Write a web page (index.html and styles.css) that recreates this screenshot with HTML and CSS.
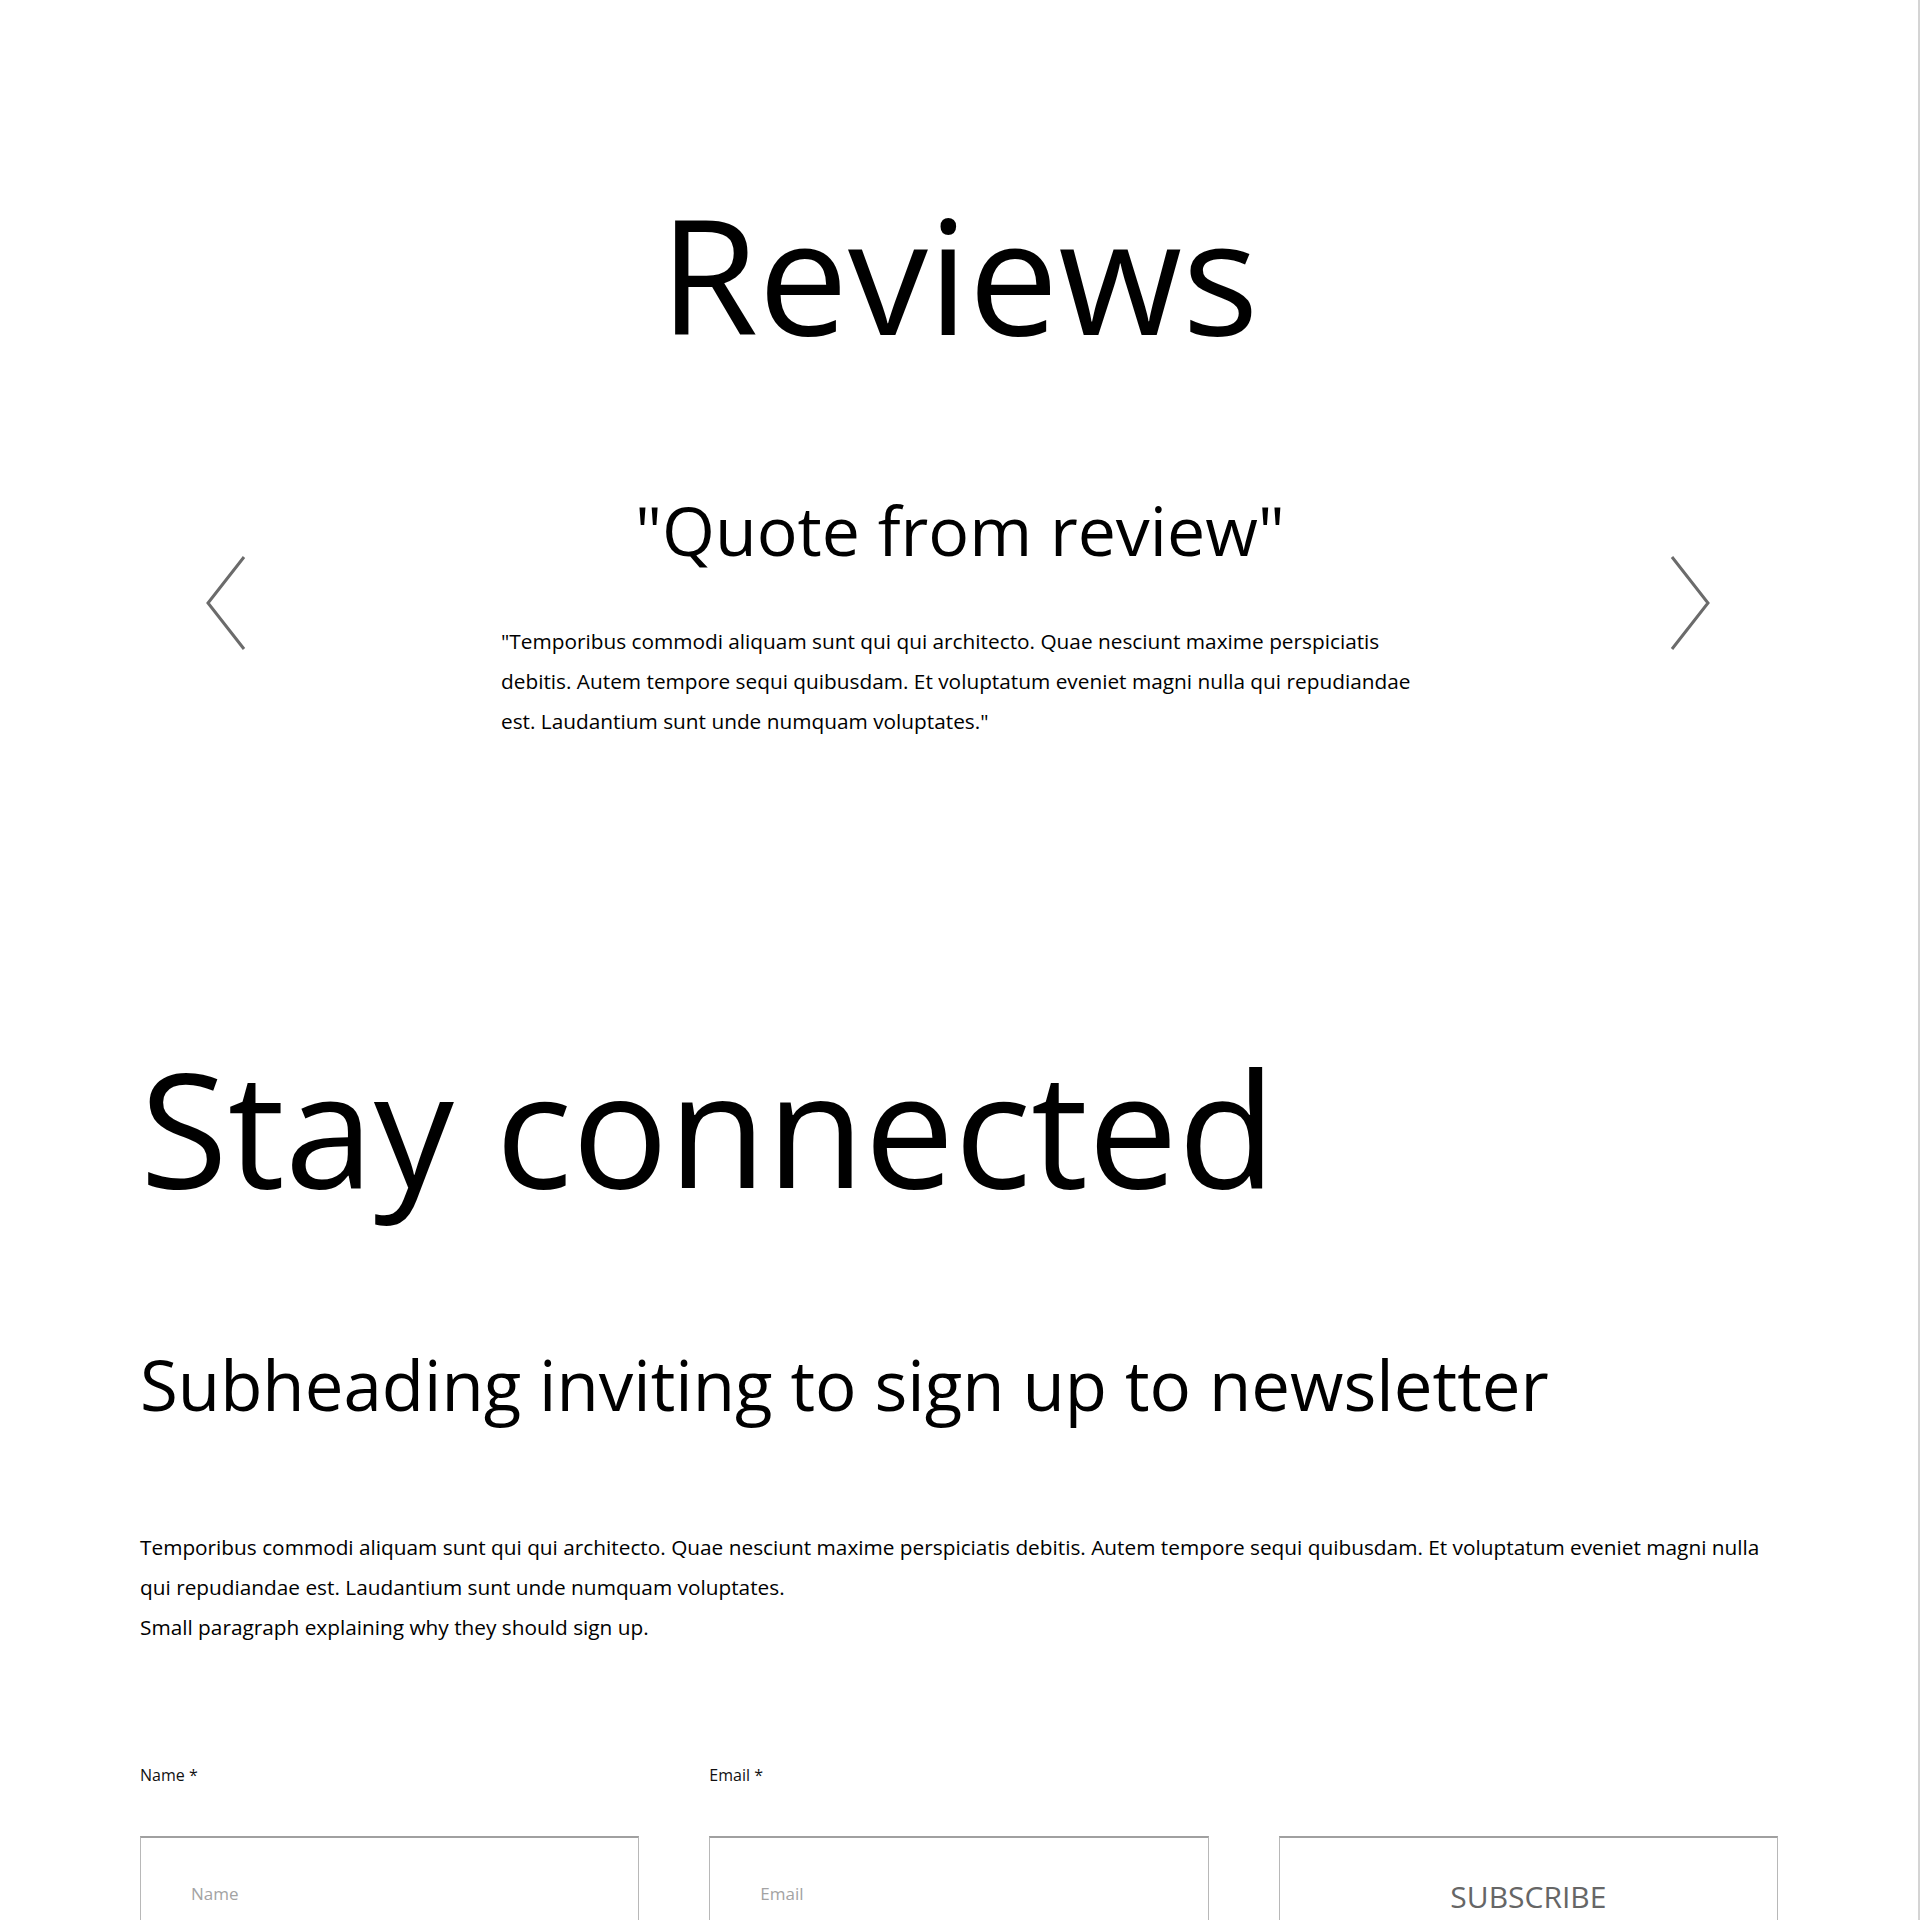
FILE: index.html
```html
<!DOCTYPE html>
<html lang="en">
<head>
    <meta charset="UTF-8">
    <meta name="viewport" content="width=device-width, initial-scale=1.0">
    <title>Reviews</title>
    <link rel="stylesheet" href="styles.css">
</head>
<body>
    <div class="page">
        <section class="reviews">
            <h1 class="big-title center">Reviews</h1>
            <div class="slider">
                <button class="arrow" aria-label="Previous">
                    <svg width="40" height="96" viewBox="0 0 40 96"><polyline points="38,2 2,48 38,94" /></svg>
                </button>
                <div class="review">
                    <h2 class="sub-title center">"Quote from review"</h2>
                    <p class="text">"Temporibus commodi aliquam sunt qui qui architecto. Quae nesciunt maxime perspiciatis debitis. Autem tempore sequi quibusdam. Et voluptatum eveniet magni nulla qui repudiandae est. Laudantium sunt unde numquam voluptates."</p>
                </div>
                <button class="arrow arrow-next" aria-label="Next">
                    <svg width="40" height="96" viewBox="0 0 40 96"><polyline points="2,2 38,48 2,94" /></svg>
                </button>
            </div>
        </section>

        <section class="newsletter">
            <h1 class="big-title">Stay connected</h1>
            <h2 class="sub-title">Subheading inviting to sign up to newsletter</h2>
            <p class="text">Temporibus commodi aliquam sunt qui qui architecto. Quae nesciunt maxime perspiciatis debitis. Autem tempore sequi quibusdam. Et voluptatum eveniet magni nulla qui repudiandae est. Laudantium sunt unde numquam voluptates.<br>Small paragraph explaining why they should sign up.</p>

            <form class="signup" onsubmit="return false">
                <div class="field">
                    <label for="name">Name *</label>
                    <input type="text" id="name" placeholder="Name">
                </div>
                <div class="field">
                    <label for="email">Email *</label>
                    <input type="email" id="email" placeholder="Email">
                </div>
                <div class="field">
                    <button type="submit" class="subscribe">SUBSCRIBE</button>
                </div>
            </form>
        </section>
    </div>
</body>
</html>
```

FILE: styles.css
```css
body {
    margin: 0;
    padding: 0;
    background-color: #fff;
    color: #000;
    font-family: "Open Sans", "Noto Sans", Arial, sans-serif;
}
.page {
    min-height: 100vh;
    border-right: 2px solid #d4d4d4;
    box-sizing: border-box;
}
.center {
    text-align: center;
}
.big-title {
    font-size: 160px;
    font-weight: 400;
    line-height: 1.2;
    margin: 0;
}
.sub-title {
    font-size: 69px;
    font-weight: 400;
    line-height: 1.2;
    margin: 0;
}
.text {
    font-size: 20.8px;
    line-height: 40px;
    margin: 0;
}

/* reviews */
.reviews {
    padding-top: 177px;
}
.slider {
    display: flex;
    align-items: center;
    padding: 0 208px 0 206px;
    margin-top: 120px;
}
.review {
    width: 940px;
    margin-left: 255px;
}
.review .sub-title {
    width: 918px;
    font-size: 68px;
}
.review .text {
    margin-top: 50px;
}
.arrow {
    background: none;
    border: none;
    padding: 0;
    cursor: pointer;
    margin-top: -24px;
}
.arrow-next {
    margin-left: auto;
}
.arrow svg {
    display: block;
}
.arrow polyline {
    fill: none;
    stroke: #6b6b6b;
    stroke-width: 3;
}

/* newsletter */
.newsletter {
    padding: 289px 140px 0;
}
.newsletter .sub-title {
    margin-top: 121px;
}
.newsletter .text {
    margin-top: 102px;
}
.signup {
    display: grid;
    grid-template-columns: repeat(3, 1fr);
    column-gap: 70px;
    margin-top: 118px;
}
.field label {
    display: block;
    font-size: 16px;
    line-height: 20px;
    height: 20px;
    margin-bottom: 51px;
    color: #111;
}
.field input,
.field .subscribe {
    display: block;
    width: 100%;
    height: 114px;
    box-sizing: border-box;
    border: 1px solid #b8b8b8;
    border-top: 2px solid #a0a0a0;
    background: #fff;
    font-family: inherit;
}
.field input {
    padding: 0 50px;
    font-size: 17px;
    color: #333;
}
.field input::placeholder {
    color: #a3a3a3;
}
.field:last-child {
    padding-top: 71px;
}
.subscribe {
    font-size: 30px;
    color: #666;
    cursor: pointer;
    padding-top: 6px;
}
```
